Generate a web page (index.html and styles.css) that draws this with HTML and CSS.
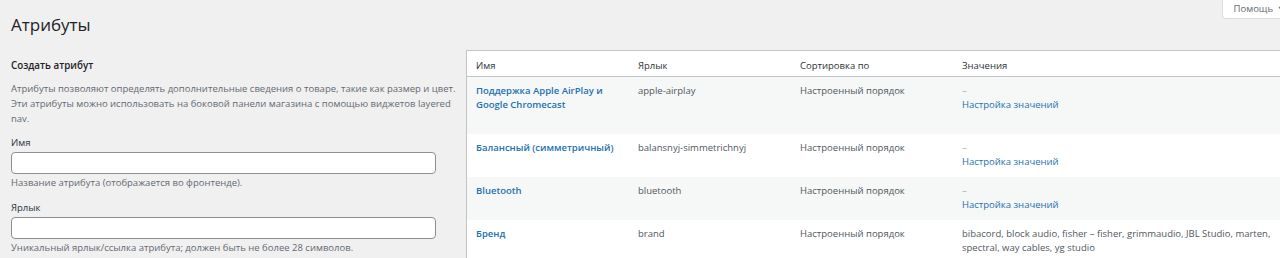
FILE: index.html
```html
<!DOCTYPE html>
<html lang="ru">
<head>
    <meta charset="UTF-8">
    <meta name="viewport" content="width=device-width, initial-scale=1.0">
    <title>Атрибуты</title>
    <link rel="stylesheet" href="styles.css">
</head>
<body>
    <!-- Header -->
    <div class="page-header">
        <h1>Атрибуты</h1>
        <button class="help-toggle" type="button">Помощь
            <svg class="help-arrow" width="10" height="10" viewBox="0 0 10 10"><path d="M1 3l4 4 4-4" fill="none" stroke="#787c82" stroke-width="1.5"/></svg>
        </button>
    </div>

    <div class="col-wrap">
        <!-- Create attribute form -->
        <div class="col-left">
            <h2>Создать атрибут</h2>
            <p class="intro">Атрибуты позволяют определять дополнительные сведения о товаре, такие как размер и цвет. Эти атрибуты можно использовать на боковой панели магазина с помощью виджетов layered nav.</p>
            <div class="form-field">
                <label for="attribute_label">Имя</label>
                <input type="text" id="attribute_label">
                <p class="description">Название атрибута (отображается во фронтенде).</p>
            </div>
            <div class="form-field">
                <label for="attribute_name">Ярлык</label>
                <input type="text" id="attribute_name">
                <p class="description">Уникальный ярлык/ссылка атрибута; должен быть не более 28 символов.</p>
            </div>
        </div>

        <!-- Attributes table -->
        <div class="col-right">
            <table class="attributes-table">
                <thead>
                    <tr>
                        <th class="col-name">Имя</th>
                        <th class="col-slug">Ярлык</th>
                        <th class="col-order">Сортировка по</th>
                        <th>Значения</th>
                    </tr>
                </thead>
                <tbody>
                    <tr class="alt">
                        <td><a class="row-title" href="#">Поддержка Apple AirPlay и Google Chromecast</a><div class="row-actions">Изменить</div></td>
                        <td>apple-airplay</td>
                        <td>Настроенный порядок</td>
                        <td><span class="na">–</span><br><a href="#">Настройка значений</a></td>
                    </tr>
                    <tr>
                        <td><a class="row-title" href="#">Балансный (симметричный)</a><div class="row-actions">Изменить</div></td>
                        <td>balansnyj-simmetrichnyj</td>
                        <td>Настроенный порядок</td>
                        <td><span class="na">–</span><br><a href="#">Настройка значений</a></td>
                    </tr>
                    <tr class="alt">
                        <td><a class="row-title" href="#">Bluetooth</a><div class="row-actions">Изменить</div></td>
                        <td>bluetooth</td>
                        <td>Настроенный порядок</td>
                        <td><span class="na">–</span><br><a href="#">Настройка значений</a></td>
                    </tr>
                    <tr>
                        <td><a class="row-title" href="#">Бренд</a><div class="row-actions">Изменить</div></td>
                        <td>brand</td>
                        <td>Настроенный порядок</td>
                        <td>bibacord, block audio, fisher – fisher, grimmaudio, JBL Studio, marten, spectral, way cables, yg studio<br><a href="#">Настройка значений</a></td>
                    </tr>
                </tbody>
            </table>
        </div>
    </div>
</body>
</html>
```

FILE: styles.css
```css
body {
    font-family: 'Open Sans', 'Noto Sans', sans-serif;
    font-size: 9.5px;
    line-height: 15px;
    color: #3c434a;
    background-color: #f0f0f1;
    margin: 0;
    padding: 0;
    overflow: hidden;
}
a {
    color: #2271b1;
    text-decoration: none;
}
/* Header */
.page-header {
    display: flex;
    justify-content: space-between;
    align-items: flex-start;
    height: 50px;
    padding-left: 11px;
}
.page-header h1 {
    font-size: 17px;
    font-weight: 400;
    line-height: 22px;
    margin: 14px 0 0;
    color: #1d2327;
}
.help-toggle {
    display: flex;
    align-items: center;
    gap: 5px;
    box-sizing: border-box;
    height: 19px;
    margin-right: -15px;
    padding: 0 6px 1px 11px;
    font-family: inherit;
    font-size: 9.5px;
    color: #646970;
    background: #fff;
    border: 1px solid #dcdcde;
    border-top: none;
    border-radius: 0 0 4px 4px;
}
.help-arrow {
    flex-shrink: 0;
}
/* Columns */
.col-wrap {
    display: flex;
    align-items: flex-start;
}
.col-left {
    width: 448px;
    flex-shrink: 0;
    padding-left: 11px;
    margin-right: 7px;
}
.col-left h2 {
    font-size: 9.8px;
    font-weight: 600;
    line-height: 14px;
    margin: 9px 0 0;
    color: #1d2327;
}
.intro {
    margin: 8px 0 0;
    color: #646970;
}
.form-field {
    margin-top: 9px;
}
.form-field + .form-field {
    margin-top: 10px;
}
.form-field label {
    display: block;
    color: #2c3338;
}
.form-field input {
    display: block;
    box-sizing: border-box;
    width: 425px;
    height: 22px;
    margin: 2px 0 0;
    border: 1px solid #8c8f94;
    border-radius: 4px;
    background: #fff;
}
.description {
    margin: 1px 0 0;
    color: #646970;
}
/* Table */
.col-right {
    flex-shrink: 0;
}
.attributes-table {
    width: 840px;
    border-collapse: collapse;
    background: #fff;
    border: 1px solid #c3c4c7;
    box-shadow: 0 1px 1px rgba(0, 0, 0, 0.04);
    line-height: 14px;
}
.attributes-table th {
    text-align: left;
    font-weight: 400;
    color: #2c3338;
    padding: 8px 9px 3px;
    border-bottom: 1px solid #c3c4c7;
}
.attributes-table th.col-name,
.attributes-table th.col-slug,
.attributes-table th.col-order {
    width: 144px;
}
.attributes-table td {
    vertical-align: top;
    padding: 7px 9px 8px;
    color: #50575e;
}
.attributes-table tr.alt td {
    background: #f6f7f7;
}
.row-title {
    font-weight: 600;
}
.row-actions {
    visibility: hidden;
}
.na {
    color: #a7aaad;
}
```
